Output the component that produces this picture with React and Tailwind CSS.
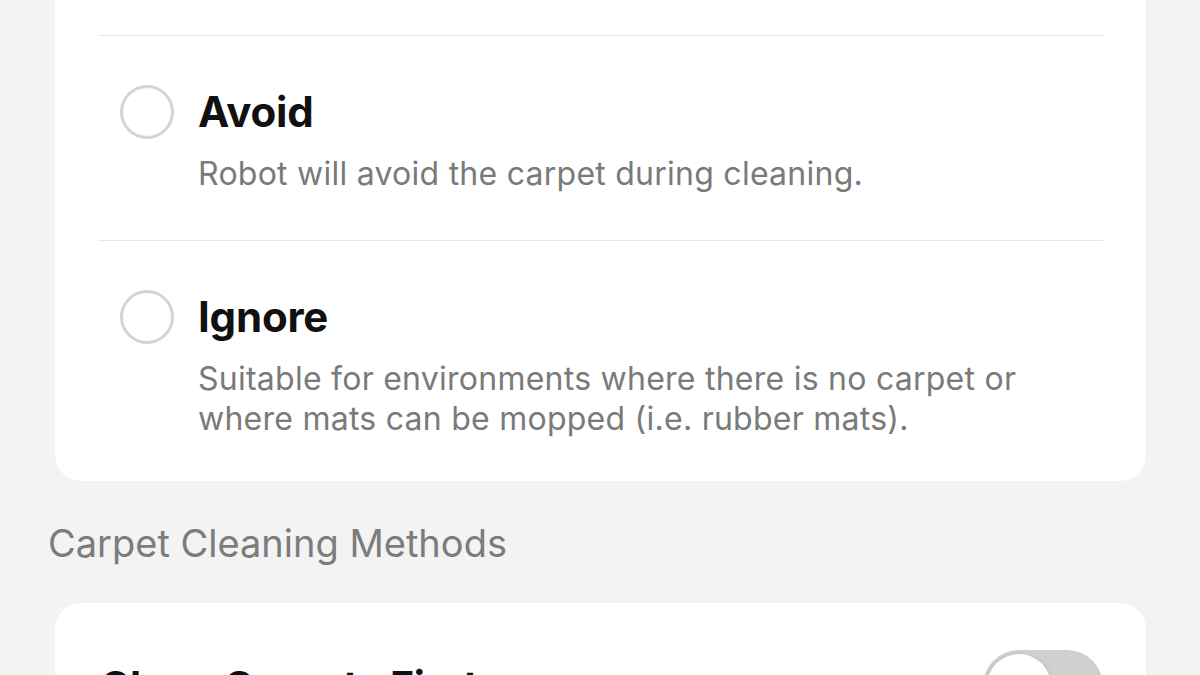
import React from "react";

function Radio() {
  return (
    <div className="w-[54px] h-[54px] shrink-0 rounded-full border-[3px] border-[#d4d4d4] bg-white" />
  );
}

function OptionRow({ title, desc, last }) {
  return (
    <div className={`border-t border-[#e6e6e6] pt-[52px] ${last ? "pb-[42px]" : "pb-[46px]"}`}>
      <div className="flex items-start pl-[22px]">
        <div className="h-[48px] flex items-center">
          <Radio />
        </div>
        <div className="ml-[24px] flex flex-col">
          <div className="h-[48px] leading-[48px] text-[42px] font-bold text-[#111111] tracking-[-0.2px]">
            {title}
          </div>
          <div className="mt-[18px] text-[32px] leading-[40px] tracking-[0.25px] text-[#7a7a7a]">
            {desc}
          </div>
        </div>
      </div>
    </div>
  );
}

export default function App() {
  return (
    <div
      className="w-[1200px] h-[675px] overflow-hidden bg-[#f3f3f3]"
      style={{ fontFamily: "Inter, 'Noto Sans', sans-serif" }}
    >
      <div className="ml-[55px] w-[1091px] bg-white rounded-b-[26px] px-[43px]">
        <div className="h-[35px]" />
        <OptionRow
          title="Avoid"
          desc="Robot will avoid the carpet during cleaning."
        />
        <OptionRow
          title="Ignore"
          desc={
            <>
              Suitable for environments where there is no carpet or
              <br />
              where mats can be mopped (i.e. rubber mats).
            </>
          }
          last
        />
      </div>
      <div className="mt-[38px] ml-[48px] h-[48px] leading-[48px] text-[38px] text-[#7c7c7c]">
        Carpet Cleaning Methods
      </div>
      <div className="mt-[36px] ml-[55px] w-[1091px] h-[200px] bg-white rounded-t-[26px] pl-[45px] pr-[43px] pt-[47px]">
        <div className="flex items-center justify-between">
          <div className="text-[41px] font-bold text-[#111111] leading-[72px] tracking-[-0.3px]">
            Clean Carpets First
          </div>
          <div className="w-[120px] h-[72px] rounded-full bg-[#d0d0d0] p-[4px] flex items-center">
            <div className="w-[64px] h-[64px] rounded-full bg-white shadow-[0_2px_6px_rgba(0,0,0,0.15)]" />
          </div>
        </div>
      </div>
    </div>
  );
}
